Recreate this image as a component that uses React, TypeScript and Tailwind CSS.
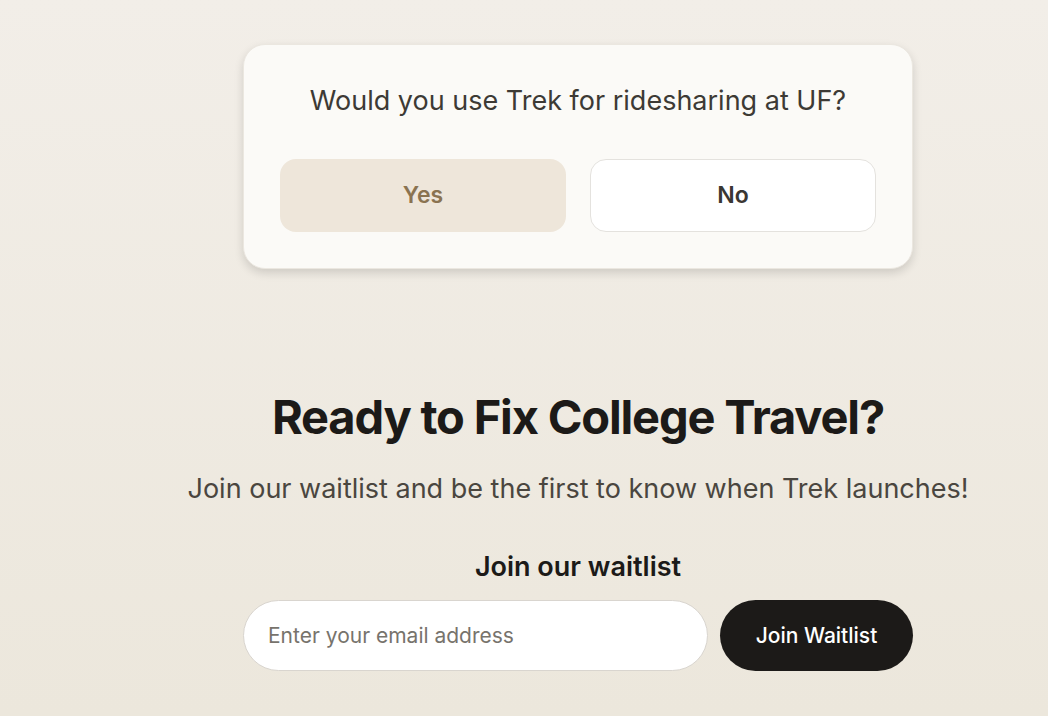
export default function App() {
  return (
    <div className="min-h-screen w-full bg-gradient-to-b from-[#f2eee8] to-[#ece7dc] pt-[44px] pl-[108px] flex flex-col items-center font-['Inter',sans-serif]">
      {/* Poll card */}
      <div className="w-[670px] rounded-[22px] bg-[#fbfaf7] border border-[#ebe7e0] shadow-[0_4px_10px_rgba(0,0,0,0.14)] px-9 pt-10 pb-9">
        <p className="text-center text-[27px] leading-8 text-[#3d3a35]">
          Would you use Trek for ridesharing at UF?
        </p>
        <div className="mt-[42px] grid grid-cols-2 gap-6">
          <button className="h-[73px] rounded-2xl bg-[#eee6da] text-[23px] font-semibold text-[#8a7350]">
            Yes
          </button>
          <button className="h-[73px] rounded-2xl bg-white border border-[#e4e2de] text-[23px] font-semibold text-[#3a3733]">
            No
          </button>
        </div>
      </div>

      {/* CTA */}
      <h2 className="mt-[118px] text-[47px] leading-[60px] font-bold tracking-tight text-[#1c1a18]">
        Ready to Fix College Travel?
      </h2>
      <p className="mt-[26px] text-[27px] leading-8 text-[#4a463f]">
        Join our waitlist and be the first to know when Trek launches!
      </p>

      <h3 className="mt-[46px] text-[27px] leading-8 font-semibold text-[#1c1a18]">
        Join our waitlist
      </h3>
      <form
        className="mt-[17px] flex w-[670px] gap-3"
        onSubmit={(e) => e.preventDefault()}
      >
        <input
          type="email"
          placeholder="Enter your email address"
          className="h-[71px] flex-1 rounded-full border border-[#d9d5cf] bg-white px-6 text-[21px] text-[#3d3a35] placeholder:text-[#77736c] outline-none"
        />
        <button className="h-[71px] w-[193px] rounded-full bg-[#1c1a18] text-[21px] font-medium text-white">
          Join Waitlist
        </button>
      </form>
    </div>
  );
}
